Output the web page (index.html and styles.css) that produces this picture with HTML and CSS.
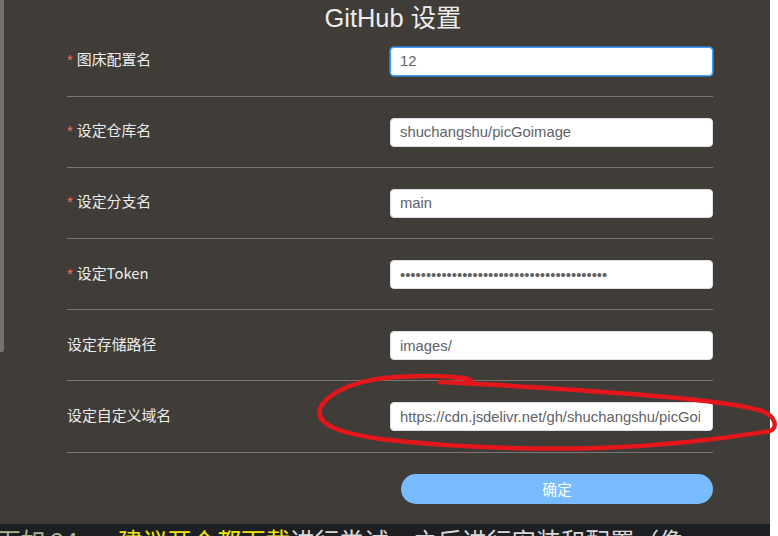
FILE: index.html
```html
<!DOCTYPE html>
<html lang="zh-CN">
<head>
<meta charset="utf-8">
<title>GitHub 设置</title>
<link rel="stylesheet" href="styles.css">
</head>
<body>
<div class="screen">
  <div class="window">
    <div class="scrollbar"></div>
    <div class="dialog">
      <h2 class="title">GitHub 设置</h2>
      <form class="form">
        <div class="row">
          <label class="label"><span class="req">*</span>图床配置名</label>
          <input class="input focus" type="text" value="12">
        </div>
        <div class="row">
          <label class="label"><span class="req">*</span>设定仓库名</label>
          <input class="input" type="text" value="shuchangshu/picGoimage">
        </div>
        <div class="row">
          <label class="label"><span class="req">*</span>设定分支名</label>
          <input class="input" type="text" value="main">
        </div>
        <div class="row">
          <label class="label"><span class="req">*</span>设定Token</label>
          <input class="input" type="password" value="ghp_abcdefghijklmnopqrstuvwxyz0123456789">
        </div>
        <div class="row">
          <label class="label">设定存储路径</label>
          <input class="input" type="text" value="images/">
        </div>
        <div class="row">
          <label class="label">设定自定义域名</label>
          <input class="input" type="text" value="https://cdn.jsdelivr.net/gh/shuchangshu/picGoimage@main">
        </div>
      </form>
      <div class="actions">
        <button class="confirm" type="button">确定</button>
      </div>
    </div>
  </div>
  <div class="terminal"><span class="seg1">下如 24，</span><span class="hl">建议开个都下载</span><span class="plain">进行尝试，之后进行安装和配置（像</span></div>
  <svg class="annotation" width="778" height="536" viewBox="0 0 778 536" aria-hidden="true">
    <path d="M 472 381 C 460 375, 420 375, 385 378 C 350 382, 325 395, 320 409 C 316 425, 340 433, 380 439 C 440 446, 520 450, 600 448 C 680 445, 740 436, 770 431 C 778 428, 776 416, 762 411 C 730 401, 650 395, 560 389 C 520 386, 480 384, 440 382" fill="none" stroke="#e3161c" stroke-width="4.5" stroke-linecap="round" stroke-linejoin="round"/>
    <path d="M 455 378 C 465 377, 472 379, 470 383" fill="none" stroke="#e3161c" stroke-width="4.5" stroke-linecap="round"/>
  </svg>
</div>
</body>
</html>
```
FILE: styles.css
```css
html, body {
  margin: 0;
  padding: 0;
  background: #ffffff;
}

.screen {
  position: relative;
  width: 778px;
  height: 536px;
  overflow: hidden;
}

.window {
  width: 770px;
  height: 524px;
  background: #403c38;
  display: flex;
  overflow: hidden;
}

.scrollbar {
  flex: none;
  width: 4px;
  height: 352px;
  background: #717372;
  border-bottom-right-radius: 2px;
}

.dialog {
  flex: none;
  margin-left: 63px;
  width: 646px;
  display: flex;
  flex-direction: column;
}

.title {
  margin: 0;
  height: 36px;
  line-height: 36px;
  text-align: center;
  padding-left: 6px;
  font-family: "Liberation Sans", "Noto Sans CJK SC", sans-serif;
  font-size: 25.4px;
  font-weight: 400;
  color: #ececec;
}

.form {
  margin: 0;
  display: flex;
  flex-direction: column;
}

.row {
  display: flex;
  align-items: center;
  justify-content: space-between;
  padding: 21px 0 20.2px;
  border-bottom: 1px solid #7a7773;
}

.row:first-child {
  padding-top: 10.5px;
}

.label {
  font-family: "Noto Sans CJK SC", sans-serif;
  font-size: 14.9px;
  line-height: 18px;
  padding-bottom: 3px;
  color: #ececec;
}

.req {
  color: #f56c6c;
  margin-right: 4px;
  font-family: "Liberation Sans", sans-serif;
}

.input {
  width: 323px;
  height: 29px;
  box-sizing: border-box;
  margin: 0;
  border: 1px solid #dcdfe6;
  border-radius: 4px;
  padding: 0 12px 0 9px;
  font-family: "Liberation Sans", "Noto Sans CJK SC", sans-serif;
  font-size: 14.8px;
  color: #606266;
  background: #ffffff;
  outline: none;
}

.input.focus {
  border-color: #409eff;
  box-shadow: 0 0 0 0.5px #409eff;
}

.actions {
  display: flex;
  justify-content: flex-end;
  padding-top: 21px;
}

.confirm {
  width: 312px;
  height: 30px;
  border: none;
  border-radius: 15px;
  background: #79bbff;
  color: #ffffff;
  font-family: "Noto Sans CJK SC", sans-serif;
  font-size: 14.8px;
  padding: 0;
}

.terminal {
  width: 770px;
  height: 12px;
  box-sizing: border-box;
  padding-top: 4px;
  background: #1e1f22;
  overflow: hidden;
  white-space: nowrap;
  font-family: "Noto Sans CJK SC", sans-serif;
  font-size: 24.6px;
  line-height: 24.6px;
  color: #d8d8d8;
}

.seg1 {
  display: inline-block;
  width: 122px;
  margin-left: -4px;
  color: #a6b890;
}

.hl {
  color: #f2e60f;
}

.plain {
  color: #d8d8d8;
}

.annotation {
  position: absolute;
  left: 0;
  top: 0;
  pointer-events: none;
}
```
